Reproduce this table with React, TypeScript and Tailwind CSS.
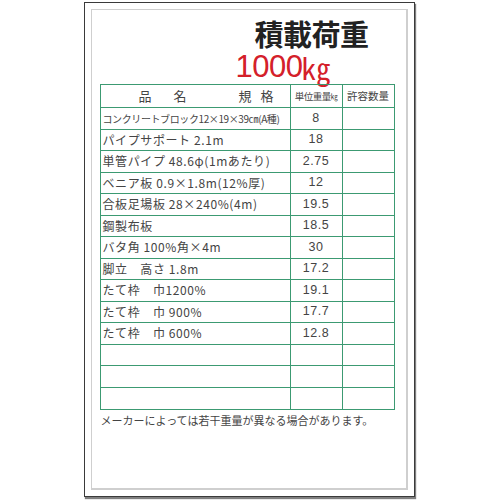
import React from 'react';

const rows: [string, string, string][] = [
  ['コンクリートブロック12×19×39㎝(A種)', '8', 'text-[10px] tracking-[-0.4px]'],
  ['パイプサポート 2.1m', '18', ''],
  ['単管パイプ 48.6φ(1mあたり)', '2.75', ''],
  ['ベニア板 0.9×1.8m(12%厚)', '12', ''],
  ['合板足場板 28×240%(4m)', '19.5', ''],
  ['鋼製布板', '18.5', ''],
  ['バタ角 100%角×4m', '30', ''],
  ['脚立　高さ 1.8m', '17.2', ''],
  ['たて枠　巾1200%', '19.1', ''],
  ['たて枠　巾 900%', '17.7', ''],
  ['たて枠　巾 600%', '12.8', ''],
  ['', '', ''],
  ['', '', ''],
  ['', '', ''],
];

const font = { fontFamily: '"Noto Sans CJK JP", "Liberation Sans", sans-serif' };

export default function App() {
  return (
    <div className="w-[500px] h-[500px] bg-white flex justify-center" style={font}>
      <div className="mt-[2px] ml-[-2px] w-[331px] h-[495px] border-[1.5px] border-[#3a3a3a] shadow-[1px_2px_1px_rgba(0,0,0,0.5)] p-[6px] bg-white">
        <div className="w-full h-full border border-[#cfcfcf] border-r-2 border-b-2 flex flex-col">
          <div className="pl-[163px] pt-[6px] h-[42px] text-[29px] font-bold leading-[34px] text-[#222] tracking-[-0.5px]">
            積載荷重
          </div>
          <div className="pl-[144px] h-[30px] text-[#d4202a] flex items-center">
            <span className="text-[31px] leading-[30px] tracking-[-0.5px]" style={{ fontFamily: '"Liberation Sans", sans-serif' }}>1000</span>
            <span className="text-[29px] leading-[30px] ml-[-1px]">㎏</span>
          </div>
          <div className="ml-[8px] mt-[2px] w-[295px] border-[1.5px] border-[#3c9a72]">
            <div className="flex h-[23px] border-b-[1.5px] border-[#3c9a72] text-[#444]">
              <div className="w-[190px] border-r-[1.5px] border-[#3c9a72] flex items-center text-[13px]">
                <span className="ml-[38px] tracking-[22px]">品名</span>
                <span className="ml-[30px] tracking-[9px]">規格</span>
              </div>
              <div className="w-[52px] border-r-[1.5px] border-[#3c9a72] flex items-center justify-center text-[9.5px] tracking-[-0.5px]">
                単位重量<span className="text-[7px]">㎏</span>
              </div>
              <div className="flex-1 flex items-center justify-center text-[10.5px]">許容数量</div>
            </div>
            {rows.map(([name, w, cls], i) => (
              <div
                key={i}
                className={`flex h-[21.5px] text-[#444] ${i < rows.length - 1 ? 'border-b-[1.5px] border-[#3c9a72]' : ''}`}
              >
                <div
                  className={`w-[190px] border-r-[1.5px] border-[#3c9a72] flex items-center pl-[2px] whitespace-nowrap overflow-hidden ${cls || 'text-[12px] tracking-[0.6px]'}`}
                >
                  {name}
                </div>
                <div
                  className="w-[52px] border-r-[1.5px] border-[#3c9a72] flex items-center justify-center text-[12.5px] tracking-[0.5px]"
                  style={{ fontFamily: '"Liberation Sans", sans-serif' }}
                >
                  {w}
                </div>
                <div className="flex-1" />
              </div>
            ))}
          </div>
          <div className="ml-[9px] mt-[2px] text-[11px] text-[#444]">
            メーカーによっては若干重量が異なる場合があります。
          </div>
        </div>
      </div>
    </div>
  );
}
